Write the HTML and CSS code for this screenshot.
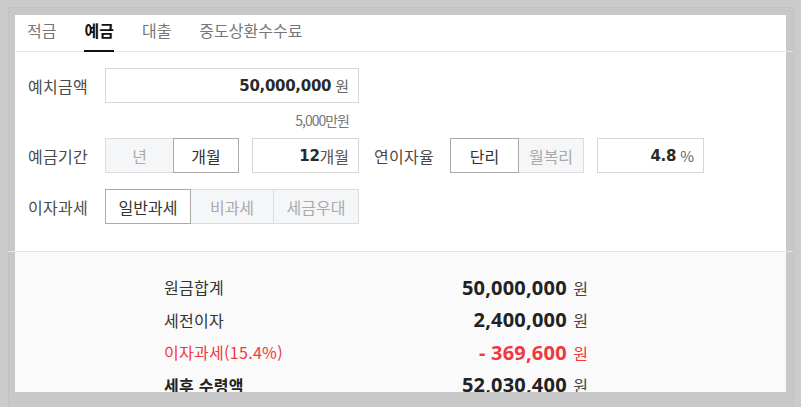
FILE: index.html
```html
<!DOCTYPE html>
<html lang="ko">
<head>
  <meta charset="UTF-8">
  <title>예금 계산기</title>
  <link rel="stylesheet" href="styles.css">
</head>
<body>

<div class="frame">
  <div class="panel">
    <div class="tabs">
      <a class="tab">적금</a>
      <a class="tab active">예금</a>
      <a class="tab">대출</a>
      <a class="tab">중도상환수수료</a>
    </div>

    <div class="form">
      <!-- 예치금액 -->
      <div class="row">
        <label class="label">예치금액</label>
        <div class="field wide">
          <b class="num">50,000,000</b><span class="unit">원</span>
        </div>
      </div>
      <p class="hint">5,000만원</p>

      <!-- 기간 / 이율 -->
      <div class="row">
        <label class="label">예금기간</label>
        <div class="seg">
          <button class="off w68">년</button>
          <button class="on w66">개월</button>
        </div>
        <div class="field short">
          <b class="num">12</b><span class="unit tight">개월</span>
        </div>
        <label class="label second">연이자율</label>
        <div class="seg">
          <button class="on w68">단리</button>
          <button class="off w66">월복리</button>
        </div>
        <div class="field short">
          <b class="num">4.8</b><span class="unit">%</span>
        </div>
      </div>

      <!-- 이자과세 -->
      <div class="row">
        <label class="label">이자과세</label>
        <div class="seg">
          <button class="on w85">일반과세</button>
          <button class="off w83">비과세</button>
          <button class="off w85">세금우대</button>
        </div>
      </div>
    </div>

    <div class="divider"></div>

    <div class="result">
      <div class="line">
        <span>원금합계</span>
        <span class="amount"><b>50,000,000</b> 원</span>
      </div>
      <div class="line">
        <span>세전이자</span>
        <span class="amount"><b>2,400,000</b> 원</span>
      </div>
      <div class="line tax">
        <span>이자과세(15.4%)</span>
        <span class="amount"><b>- 369,600</b> 원</span>
      </div>
      <div class="line total">
        <span>세후 수령액</span>
        <span class="amount"><b>52,030,400</b> 원</span>
      </div>
    </div>
  </div>
</div>

</body>
</html>
```

FILE: styles.css
```css
body {
  margin: 0;
  background: #cbcbcb;
  font-family: "Noto Sans CJK KR", "Noto Sans", sans-serif;
  color: #333;
  height: 407px;
  overflow: hidden;
}

.frame {
  margin: 7px 7px 0 8px;
  padding: 7px 7px 15px 6px;
  border: 1px solid #c2c2c2;
  border-bottom: none;
  background: #c8c8c8;
}

.panel {
  background: #fff;
}

.tabs {
  display: flex;
  align-items: flex-start;
  height: 36px;
  padding-left: 12px;
  border-bottom: 1px solid #e8e8e8;
  margin-right: -7px;
}

.tab {
  box-sizing: border-box;
  display: block;
  font-size: 16px;
  line-height: 30px;
  height: 37px;
  color: #777;
  margin-right: 28px;
  cursor: pointer;
}

.tab.active {
  color: #111;
  font-weight: bold;
  border-bottom: 2px solid #111;
}

.form {
  padding: 16px 0 27px 13px;
}

.row {
  display: flex;
  align-items: center;
  height: 35px;
}

.row + .row {
  margin-top: 16px;
}

.label {
  width: 77px;
  font-size: 16px;
  letter-spacing: 0.3px;
  color: #4a4a4a;
}

.label.second {
  margin-left: 15px;
  width: 76px;
}

.field {
  box-sizing: border-box;
  height: 35px;
  border: 1px solid #d6d6d6;
  display: flex;
  align-items: center;
  justify-content: flex-end;
  padding-right: 9px;
  color: #222;
}

.field.wide {
  width: 254px;
}

.field.short {
  width: 107px;
  margin-left: 13px;
}

.num {
  font-family: "DejaVu Sans", sans-serif;
  font-size: 15px;
  letter-spacing: -0.3px;
  color: #2a2a2a;
}

.unit {
  font-size: 15px;
  color: #666;
  margin-left: 4px;
}

.unit.tight {
  margin-left: 0;
  font-size: 16px;
  color: #555;
}

.hint {
  margin: 0;
  width: 321px;
  text-align: right;
  font-size: 14px;
  letter-spacing: -1px;
  color: #777;
  line-height: 18px;
  padding: 8px 0 9px;
}

.seg {
  display: flex;
  height: 35px;
}

.seg button {
  box-sizing: border-box;
  height: 35px;
  font-family: inherit;
  font-size: 16px;
  border: 1px solid #dcdcdc;
  padding: 0;
  margin: 0;
}

.seg button + button {
  margin-left: -1px;
}

.seg .off {
  background: #f5f6f8;
  color: #aaa;
}

.seg .on {
  background: #fff;
  color: #333;
  border-color: #a9a9a9;
  position: relative;
}

.w66 { width: 66px; }
.w68 { width: 69px; }
.w83 { width: 84px; }
.w85 { width: 86px; }

.divider {
  height: 1px;
  background: #e6e6e6;
  margin: 0 -7px;
}

.result {
  box-sizing: border-box;
  background: #fafafa;
  padding: 19px 0 0 149px;
  height: 140px;
  overflow: hidden;
}

.line {
  display: flex;
  justify-content: space-between;
  align-items: center;
  width: 424px;
  height: 32.5px;
  font-size: 16px;
  letter-spacing: 0.3px;
  color: #333;
}

.amount {
  color: #444;
  letter-spacing: 0;
}

.amount b {
  font-family: "Noto Sans", sans-serif;
  font-size: 20px;
  color: #222;
  letter-spacing: 0.2px;
  margin-right: 2px;
}

.tax,
.tax .amount,
.tax .amount b {
  color: #f0393f;
}

.total {
  font-weight: bold;
  color: #222;
}

.total .amount {
  font-weight: normal;
}
```
